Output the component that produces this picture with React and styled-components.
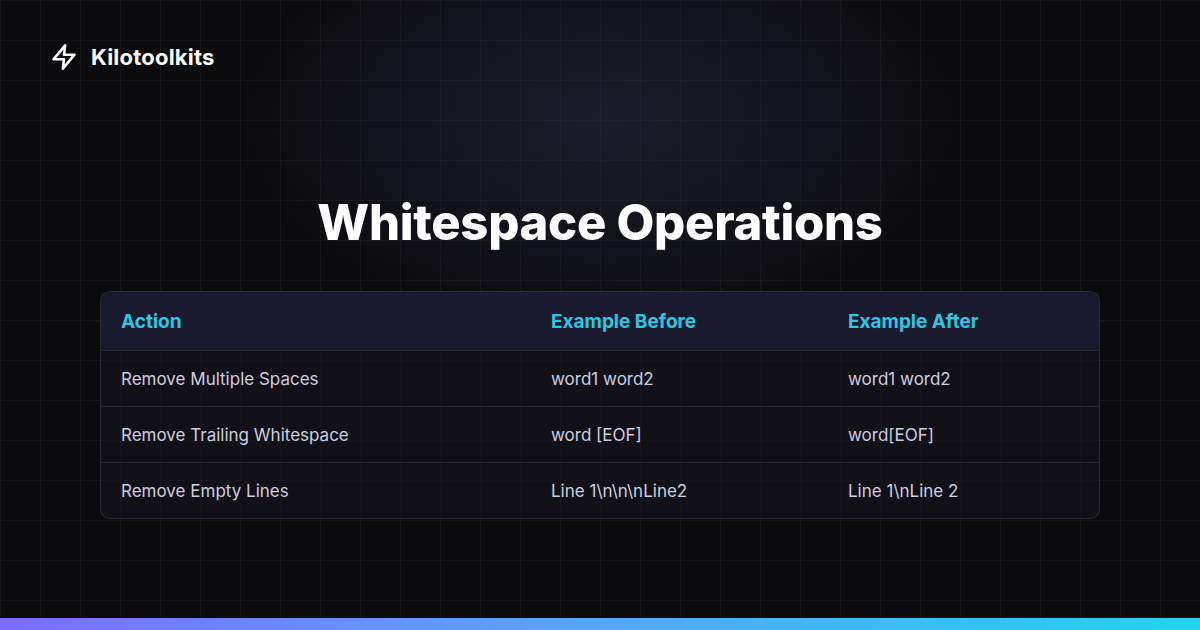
import React from "react";
import styled, { createGlobalStyle } from "styled-components";

const Global = createGlobalStyle`
  html, body { margin: 0; padding: 0; background: #0b0b0e; }
  body { font-family: Inter, "Noto Sans", sans-serif; }
`;

const Page = styled.div`
  position: relative;
  width: 1200px;
  height: 630px;
  overflow: hidden;
  background:
    radial-gradient(ellipse 520px 300px at 600px 120px, rgba(60,60,100,0.35), transparent 70%),
    linear-gradient(rgba(255,255,255,0.035) 1px, transparent 1px) 0 0 / 40px 40px,
    linear-gradient(90deg, rgba(255,255,255,0.035) 1px, transparent 1px) 0 0 / 40px 40px,
    #0b0b0e;
  display: flex;
  flex-direction: column;
  color: #fff;
`;

const Brand = styled.div`
  display: flex;
  align-items: center;
  gap: 13px;
  padding: 43px 0 0 50px;
  font-size: 22px;
  font-weight: 700;
  letter-spacing: 0.2px;
`;

const Title = styled.h1`
  margin: 0;
  margin-top: 122px;
  text-align: center;
  font-size: 49px;
  font-weight: 800;
  letter-spacing: -0.3px;
`;

const Card = styled.div`
  margin: 39px 100px 0;
  border: 1px solid rgba(255,255,255,0.12);
  border-radius: 10px;
  overflow: hidden;
  background: rgba(20,20,28,0.6);
`;

const Row = styled.div`
  display: grid;
  grid-template-columns: 430px 297px 1fr;
  align-items: center;
  padding: 0 20px;
  height: ${p => (p.$head ? 58 : 55)}px;
  background: ${p => (p.$head ? "#1a1a2e" : "transparent")};
  border-top: ${p => (p.$first ? "none" : "1px solid rgba(255,255,255,0.1)")};
  font-size: ${p => (p.$head ? 19 : 17)}px;
  font-weight: ${p => (p.$head ? 700 : 400)};
  color: ${p => (p.$head ? "#2bc8e6" : "#cfcde0")};
`;

const Bar = styled.div`
  position: absolute;
  left: 0; right: 0; bottom: 0;
  height: 12px;
  background: linear-gradient(90deg, #7c6cff, #5aa2f8 45%, #22d3ee);
`;

const rows = [
  ["Remove Multiple Spaces", "word1 word2", "word1 word2"],
  ["Remove Trailing Whitespace", "word [EOF]", "word[EOF]"],
  ["Remove Empty Lines", "Line 1\\n\\n\\nLine2", "Line 1\\nLine 2"],
];

export default function App() {
  return (
    <Page>
      <Global />
      <Brand>
        <svg width="28" height="28" viewBox="0 0 24 24" fill="none" stroke="#fff" strokeWidth="2.2" strokeLinecap="round" strokeLinejoin="round">
          <path d="M13 2 3 14h9l-1 8 10-12h-9l1-8z" />
        </svg>
        Kilotoolkits
      </Brand>
      <Title>Whitespace Operations</Title>
      <Card>
        <Row $head $first>
          <span>Action</span><span>Example Before</span><span>Example After</span>
        </Row>
        {rows.map(r => (
          <Row key={r[0]}>
            {r.map(c => <span key={c}>{c}</span>)}
          </Row>
        ))}
      </Card>
      <Bar />
    </Page>
  );
}
